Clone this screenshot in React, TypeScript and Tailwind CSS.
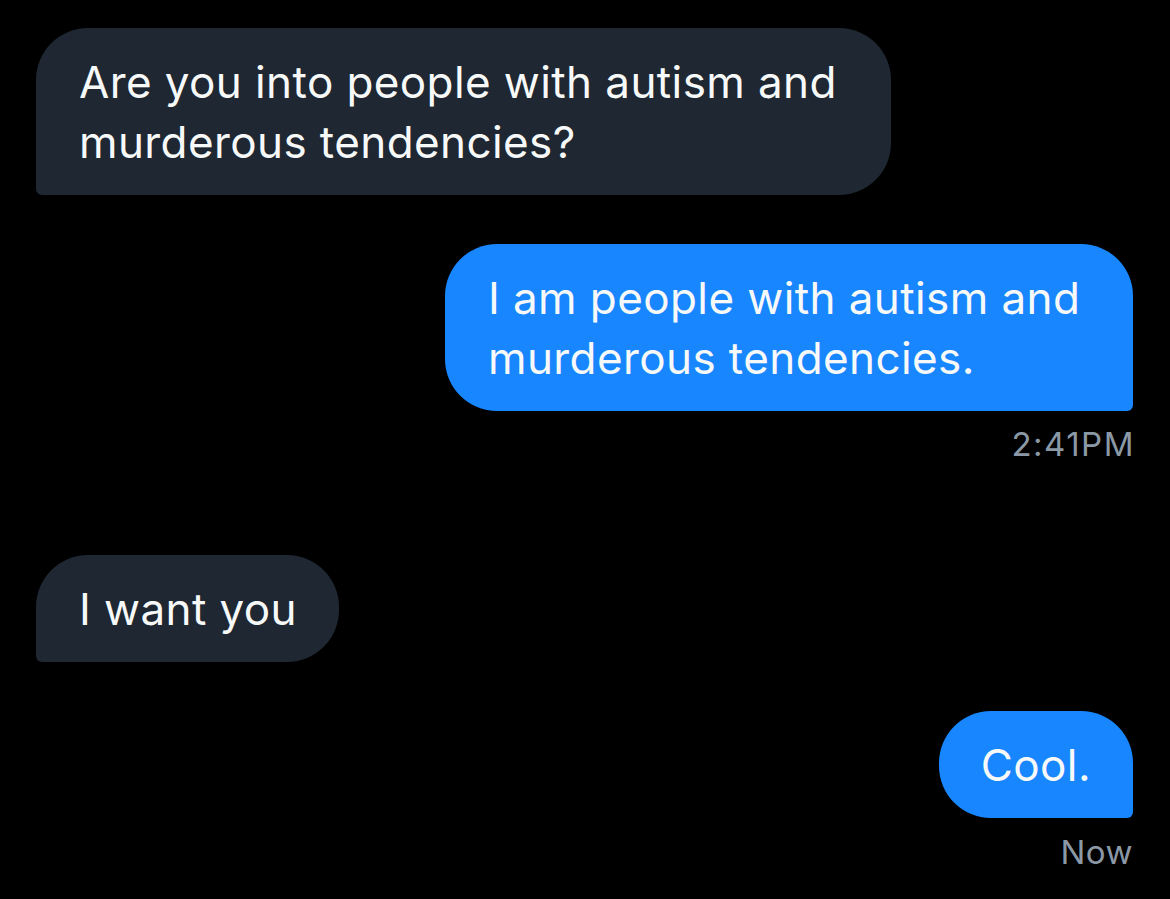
export default function App() {
  return (
    <div
      className="min-h-screen w-full bg-black pt-[28px] pl-[36px] pr-[37px] text-[#f7f9f9]"
      style={{ fontFamily: 'Inter, "Noto Sans", sans-serif' }}
    >
      <div className="flex flex-col">
        {/* Received */}
        <div className="flex justify-start">
          <div className="w-[855px] rounded-[52px] rounded-bl-[6px] bg-[#1e2732] pl-[43px] pr-[44px] pt-[24px] pb-[23px] text-[44px] leading-[60px] tracking-[0.4px]">
            Are you into people with autism and murderous tendencies?
          </div>
        </div>

        {/* Sent */}
        <div className="mt-[49px] flex flex-col items-end">
          <div className="w-[688px] rounded-[52px] rounded-br-[6px] bg-[#1886fe] pl-[43px] pr-[44px] pt-[24px] pb-[23px] text-[44px] leading-[60px] tracking-[0.4px]">
            I am people with autism and murderous tendencies.
          </div>
          <div className="mt-[13px] -mr-[2px] text-[33px] leading-[40px] tracking-[1.5px] text-[#8b98a5]">2:41PM</div>
        </div>

        {/* Received */}
        <div className="mt-[91px] flex justify-start">
          <div className="rounded-[52px] rounded-bl-[6px] bg-[#1e2732] pl-[43px] pr-[42px] pt-[24px] pb-[23px] text-[44px] leading-[60px] tracking-[0.4px]">
            I want you
          </div>
        </div>

        {/* Sent */}
        <div className="mt-[49px] flex flex-col items-end">
          <div className="rounded-[52px] rounded-br-[6px] bg-[#1886fe] pl-[42px] pr-[42px] pt-[24px] pb-[23px] text-[44px] leading-[60px] tracking-[0.4px]">
            Cool.
          </div>
          <div className="mt-[14px] text-[33px] leading-[40px] tracking-[0.5px] text-[#8b98a5]">Now</div>
        </div>
      </div>
    </div>
  );
}
